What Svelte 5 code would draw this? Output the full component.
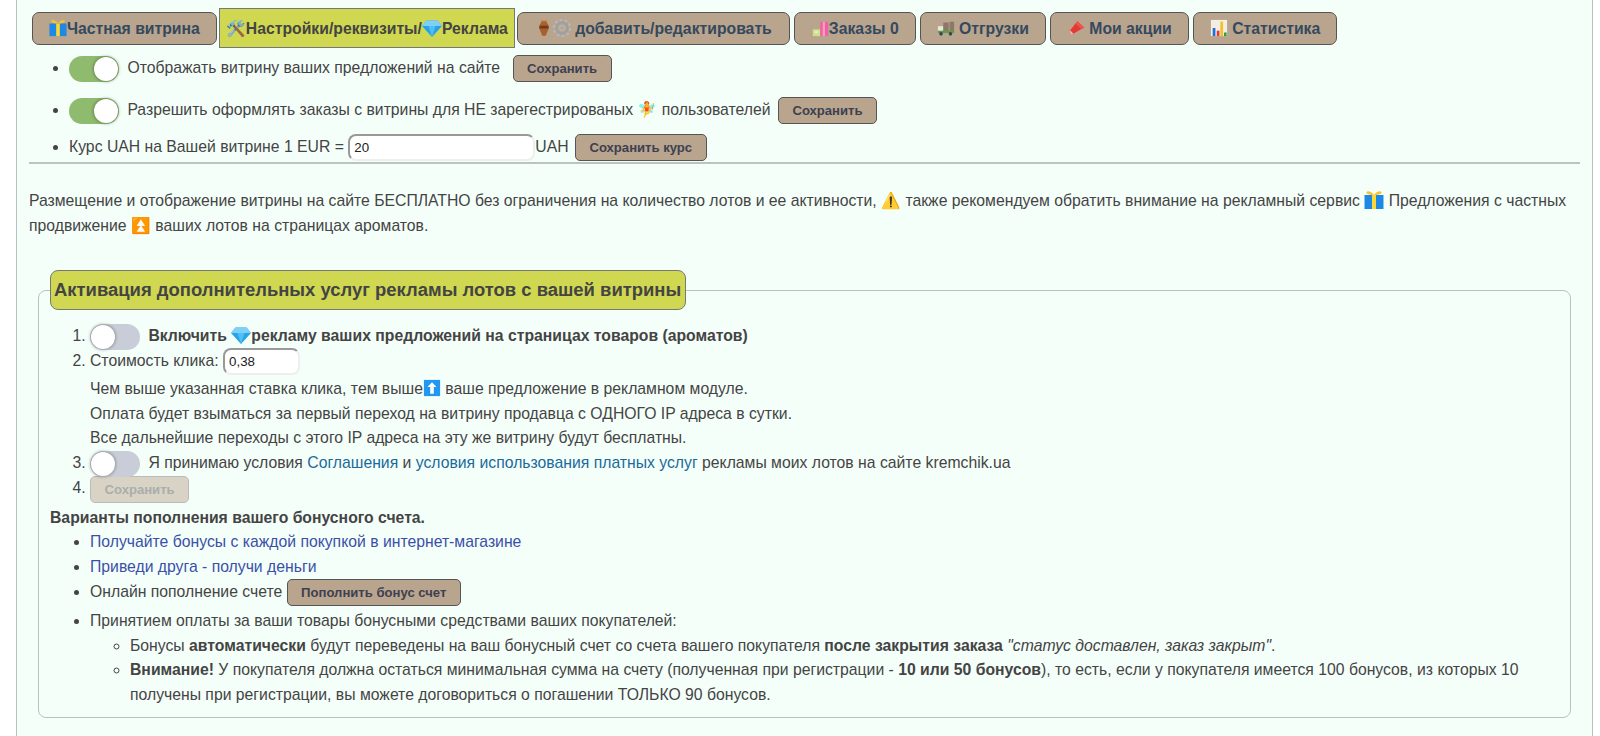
<script>
  const tabs = [
    { icons: ['gift'], label: 'Частная витрина' },
    { icons: ['vase', 'gear'], label: ' добавить/редактировать', wide: true },
    { icons: ['bags'], label: 'Заказы 0' },
    { icons: ['truck'], label: ' Отгрузки' },
    { icons: ['horn'], label: ' Мои акции' },
    { icons: ['chart'], label: ' Статистика' },
  ];
</script>

{#snippet toggle(on)}
  <span class="toggle" class:on><span class="knob"></span></span>
{/snippet}

{#snippet icon(name)}
  <svg class="ico {name}" viewBox="0 0 20 20" aria-hidden="true">
    {#if name === 'gift'}
      <path d="M.5 5h19v14H.5z" fill="#1e88e5" />
      <path d="M8 5h4v14H8z" fill="#fdd835" />
      <path d="M10 5C8 1.500 3.500.2 2.500 2S5.500 5 10 5c4.500 0 8.500-1.200 7.500-3S12 1.500 10 5z" fill="#fbc02d" />
    {:else if name === 'gem'}
      <path d="M4.500 2.500h11L20 8 10 19 0 8z" fill="#29a3e8" />
      <path d="M4.500 2.500h11L20 8H0z" fill="#7fd0f7" />
      <path d="M6.500 8h7L10 19z" fill="#4fc0f5" />
    {:else if name === 'vase'}
      <path d="M6.500 1h7l-.8 2.500c2.500 2 3 5.500 2 8.500-.8 2.500-2 4.500-2.700 6.500H8c-.7-2-1.900-4-2.700-6.500-1-3-.5-6.500 2-8.500z" fill="#a9602c" />
      <path d="M5 7.500h10l.1 3H4.900z" fill="#6d3c1c" />
      <path d="M6.500 1h7l-.4 1.400H6.900z" fill="#d98c45" />
    {:else if name === 'gear'}
      <circle cx="10" cy="10" r="6.200" fill="none" stroke="#9aa0a4" stroke-width="2.200" />
      <circle cx="10" cy="10" r="9" fill="none" stroke="#b4b8bb" stroke-width="2.400" stroke-dasharray="3 2.650" />
      <circle cx="10" cy="10" r="2.800" fill="none" stroke="#b4b8bb" stroke-width="1.200" />
    {:else if name === 'bags'}
      <path d="M2 11.500h8v7.500H2z" fill="#cfe08f" />
      <path d="M4.500 13.500h3v2h-3z" fill="#eef3cf" />
      <path d="M10.500 3H19v16h-8.500z" fill="#f2609f" />
      <path d="M13 3h2.500v16H13z" fill="#f7a0c4" />
    {:else if name === 'truck'}
      <path d="M1 8h6v6H1z" fill="#e9e6dc" />
      <path d="M7 4h6v10H7zM14 3h5v11h-5z" fill="#8d7768" />
      <path d="M1 13h18v2.500H1z" fill="#5a9e4a" />
      <circle cx="4.500" cy="16.500" r="2" fill="#37474f" />
      <circle cx="15" cy="16.500" r="2" fill="#37474f" />
    {:else if name === 'horn'}
      <path d="M11.500 2.500 19 9.500 5 17.500 2.500 14z" fill="#e53935" />
      <path d="M2.500 14 5 17.500l2-1.100-2.800-3.400z" fill="#f6b8a8" />
      <path d="M11.500 2.500 19 9.500l-3 1.700-6.500-6z" fill="#ef5350" />
    {:else if name === 'chart'}
      <path d="M1 1h18v18H1z" fill="#f2eee2" />
      <path d="M3 10h3v9H3z" fill="#1e6fdc" />
      <path d="M7.500 13h3v6h-3z" fill="#e53935" />
      <path d="M11.500 3h3v16h-3z" fill="#f6bf26" />
      <path d="M15.500 15h3v4h-3z" fill="#2e9e48" />
    {:else if name === 'up'}
      <path d="M1 1h18v18H1z" fill="#2196f3" />
      <path d="M10 3.500 15 9h-3v7.500H8V9H5z" fill="#fff" />
    {/if}
  </svg>
{/snippet}

<div class="page">
  <nav class="tabs">
    <button class="tab">{@render icon('gift')}{tabs[0].label}</button>
    <button class="tab active">🛠️Настройки/реквизиты/{@render icon('gem')}Реклама</button>
    {#each tabs.slice(1) as t}
      <button class="tab" class:wide={t.wide}>
        {#each t.icons as name}{@render icon(name)}{/each}{t.label}
      </button>
    {/each}
  </nav>

  <ul class="settings">
    <li class="row-a">
      {@render toggle(true)}
      <span class="lbl">Отображать витрину ваших предложений на сайте</span>
      <button class="btn">Сохранить</button>
    </li>
    <li class="row-b">
      {@render toggle(true)}
      <span class="lbl">Разрешить оформлять заказы с витрины для НЕ зарегестрированых 🧚 пользователей</span>
      <button class="btn">Сохранить</button>
    </li>
    <li class="row-c">
      Курс UAH на Вашей витрине 1 EUR =
      <input class="field rate" value="20" />UAH
      <button class="btn">Сохранить курс</button>
    </li>
  </ul>
  <hr />

  <p class="intro">
    Размещение и отображение витрины на сайте БЕСПЛАТНО без ограничения на количество лотов и ее активности, ⚠️ также рекомендуем обратить внимание на рекламный сервис {@render icon('gift')} Предложения с частных продвижение ⏫ ваших лотов на страницах ароматов.
  </p>

  <fieldset>
    <legend>Активация дополнительных услуг рекламы лотов с вашей витрины</legend>
    <ol>
      <li>
        {@render toggle(false)}
        <b class="lbl">Включить {@render icon('gem')}рекламу ваших предложений на страницах товаров (ароматов)</b>
      </li>
      <li class="cost">
        Стоимость клика: <input class="field price" value="0,38" />
        <div class="note">
          Чем выше указанная ставка клика, тем выше{@render icon('up')} ваше предложение в рекламном модуле.<br />
          Оплата будет взыматься за первый переход на витрину продавца с ОДНОГО IP адреса в сутки.<br />
          Все дальнейшие переходы с этого IP адреса на эту же витрину будут бесплатны.
        </div>
      </li>
      <li>
        {@render toggle(false)}
        <span class="lbl">Я принимаю условия <a href="#a" class="teal">Соглашения</a> и <a href="#b" class="teal">условия использования платных услуг</a> рекламы моих лотов на сайте kremchik.ua</span>
      </li>
      <li class="save"><button class="btn" disabled>Сохранить</button></li>
    </ol>
    <b class="bonus-title">Варианты пополнения вашего бонусного счета.</b>
    <ul class="bonus">
      <li><a href="#c">Получайте бонусы с каждой покупкой в интернет-магазине</a></li>
      <li><a href="#d">Приведи друга - получи деньги</a></li>
      <li class="topup">Онлайн пополнение счете <button class="btn">Пополнить бонус счет</button></li>
      <li>
        Принятием оплаты за ваши товары бонусными средствами ваших покупателей:
        <ul>
          <li>Бонусы <b>автоматически</b> будут переведены на ваш бонусный счет со счета вашего покупателя <b>после закрытия заказа</b> <i>"статус доставлен, заказ закрыт"</i>.</li>
          <li><b>Внимание!</b> У покупателя должна остаться минимальная сумма на счету (полученная при регистрации - <b>10 или 50 бонусов</b>), то есть, если у покупателя имеется 100 бонусов, из которых 10 получены при регистрации, вы можете договориться о погашении ТОЛЬКО 90 бонусов.</li>
        </ul>
      </li>
    </ul>
  </fieldset>
</div>

<style>
  :global(body) {
    background: #fff;
  }

  .page {
    box-sizing: border-box;
    height: 736px;
    overflow: hidden;
    margin: 0 7px 0 16px;
    padding: 8px 12px 0;
    background: #f5fffa;
    border-left: 1px solid #b9c2bd;
    border-right: 1px solid #b9c2bd;
    font: 15.75px/24.5px "Liberation Sans", sans-serif;
    color: #444;
  }

  .ico {
    width: 18px;
    height: 18px;
    vertical-align: -3px;
  }

  .ico.gem {
    width: 20px;
    height: 20px;
    vertical-align: -4px;
  }

  /* tabs */
  .tabs {
    display: flex;
    align-items: center;
    gap: 4px;
    padding-left: 3px;
  }

  .tab {
    height: 33px;
    padding: 0 16px;
    background: #b9a48e;
    border: 1px solid #555;
    border-radius: 7px;
    font: bold 15.75px "Liberation Sans", sans-serif;
    color: #34495e;
    white-space: pre;
  }

  .tab.wide {
    padding: 0 17px;
  }

  .tab.active {
    height: 40px;
    margin: 0 -2px;
    padding: 0 6px;
    background: #cfd850;
    border-color: #777;
    border-radius: 0;
    color: #444;
  }

  .btn {
    height: 27px;
    padding: 0 13.5px;
    background: #b9a48e;
    border: 1px solid #555;
    border-radius: 5px;
    font: bold 13.1px "Liberation Sans", sans-serif;
    color: #3d4050;
    vertical-align: middle;
  }

  .btn:disabled {
    background: #d9d3c6;
    border-color: #bbb;
    color: #a9aeaa;
  }

  /* toggle */
  .toggle {
    position: relative;
    display: inline-block;
    width: 50px;
    height: 26px;
    border-radius: 13px;
    background: #c9cdd8;
    vertical-align: middle;
  }

  .toggle.on {
    background: #8fbb6e;
  }

  .knob {
    position: absolute;
    top: 1px;
    left: 1px;
    width: 24px;
    height: 24px;
    border-radius: 50%;
    background: #fff;
    box-shadow: 0 0 3px 1px rgba(0, 0, 0, 0.28);
  }

  .on .knob {
    left: 25px;
  }

  .lbl {
    margin-left: 4px;
  }

  /* top settings */
  .settings {
    margin: 7px 0 0;
    padding-left: 40px;
  }

  .row-a .btn {
    margin-left: 8px;
  }

  .row-b {
    margin-top: 15px;
  }

  .row-b .btn {
    margin-left: 3px;
  }

  .row-c {
    margin-top: 10px;
  }

  .field {
    box-sizing: border-box;
    height: 27px;
    padding: 0 4px;
    border: 2px solid;
    border-color: #999 #eee #eee #999;
    border-radius: 8px;
    background: #fff;
    font: 13.33px "Liberation Sans", sans-serif;
    color: #222;
    vertical-align: middle;
  }

  .rate {
    width: 187px;
  }

  .price {
    width: 77px;
  }

  .row-c .btn {
    margin-left: 2px;
  }

  hr {
    margin: 1px 0 0;
    border: 0;
    border-top: 2px solid #bcc4c0;
  }

  .intro {
    margin: 25px 0 0;
  }

  .intro .ico {
    width: 20px;
    height: 20px;
    vertical-align: -4px;
  }

  /* fieldset */
  fieldset {
    margin: 32px 9px 0;
    padding: 0 11px 10px;
    border: 1px solid #b9c2bd;
    border-radius: 8px;
  }

  legend {
    box-sizing: border-box;
    height: 40px;
    padding: 0 4px 0 3px;
    background: #cfd850;
    border: 1px solid #777;
    border-radius: 8px;
    font: bold 18.45px/38px "Liberation Sans", sans-serif;
    color: #444;
  }

  ol {
    margin: 14px 0 0;
    padding-left: 40px;
  }

  .cost {
    margin-top: -2px;
  }

  .note {
    margin: 2px 0 0;
  }

  .save {
    margin: -1px 0 3px;
  }

  .bonus-title {
    display: block;
  }

  .bonus {
    margin: 0;
    padding-left: 40px;
  }

  .bonus ul {
    margin: 0;
    padding-left: 40px;
  }

  .topup {
    margin: 0 0 3px;
  }

  a {
    color: #3a50a8;
    text-decoration: none;
  }

  a.teal {
    color: #1a6a9a;
  }
</style>
